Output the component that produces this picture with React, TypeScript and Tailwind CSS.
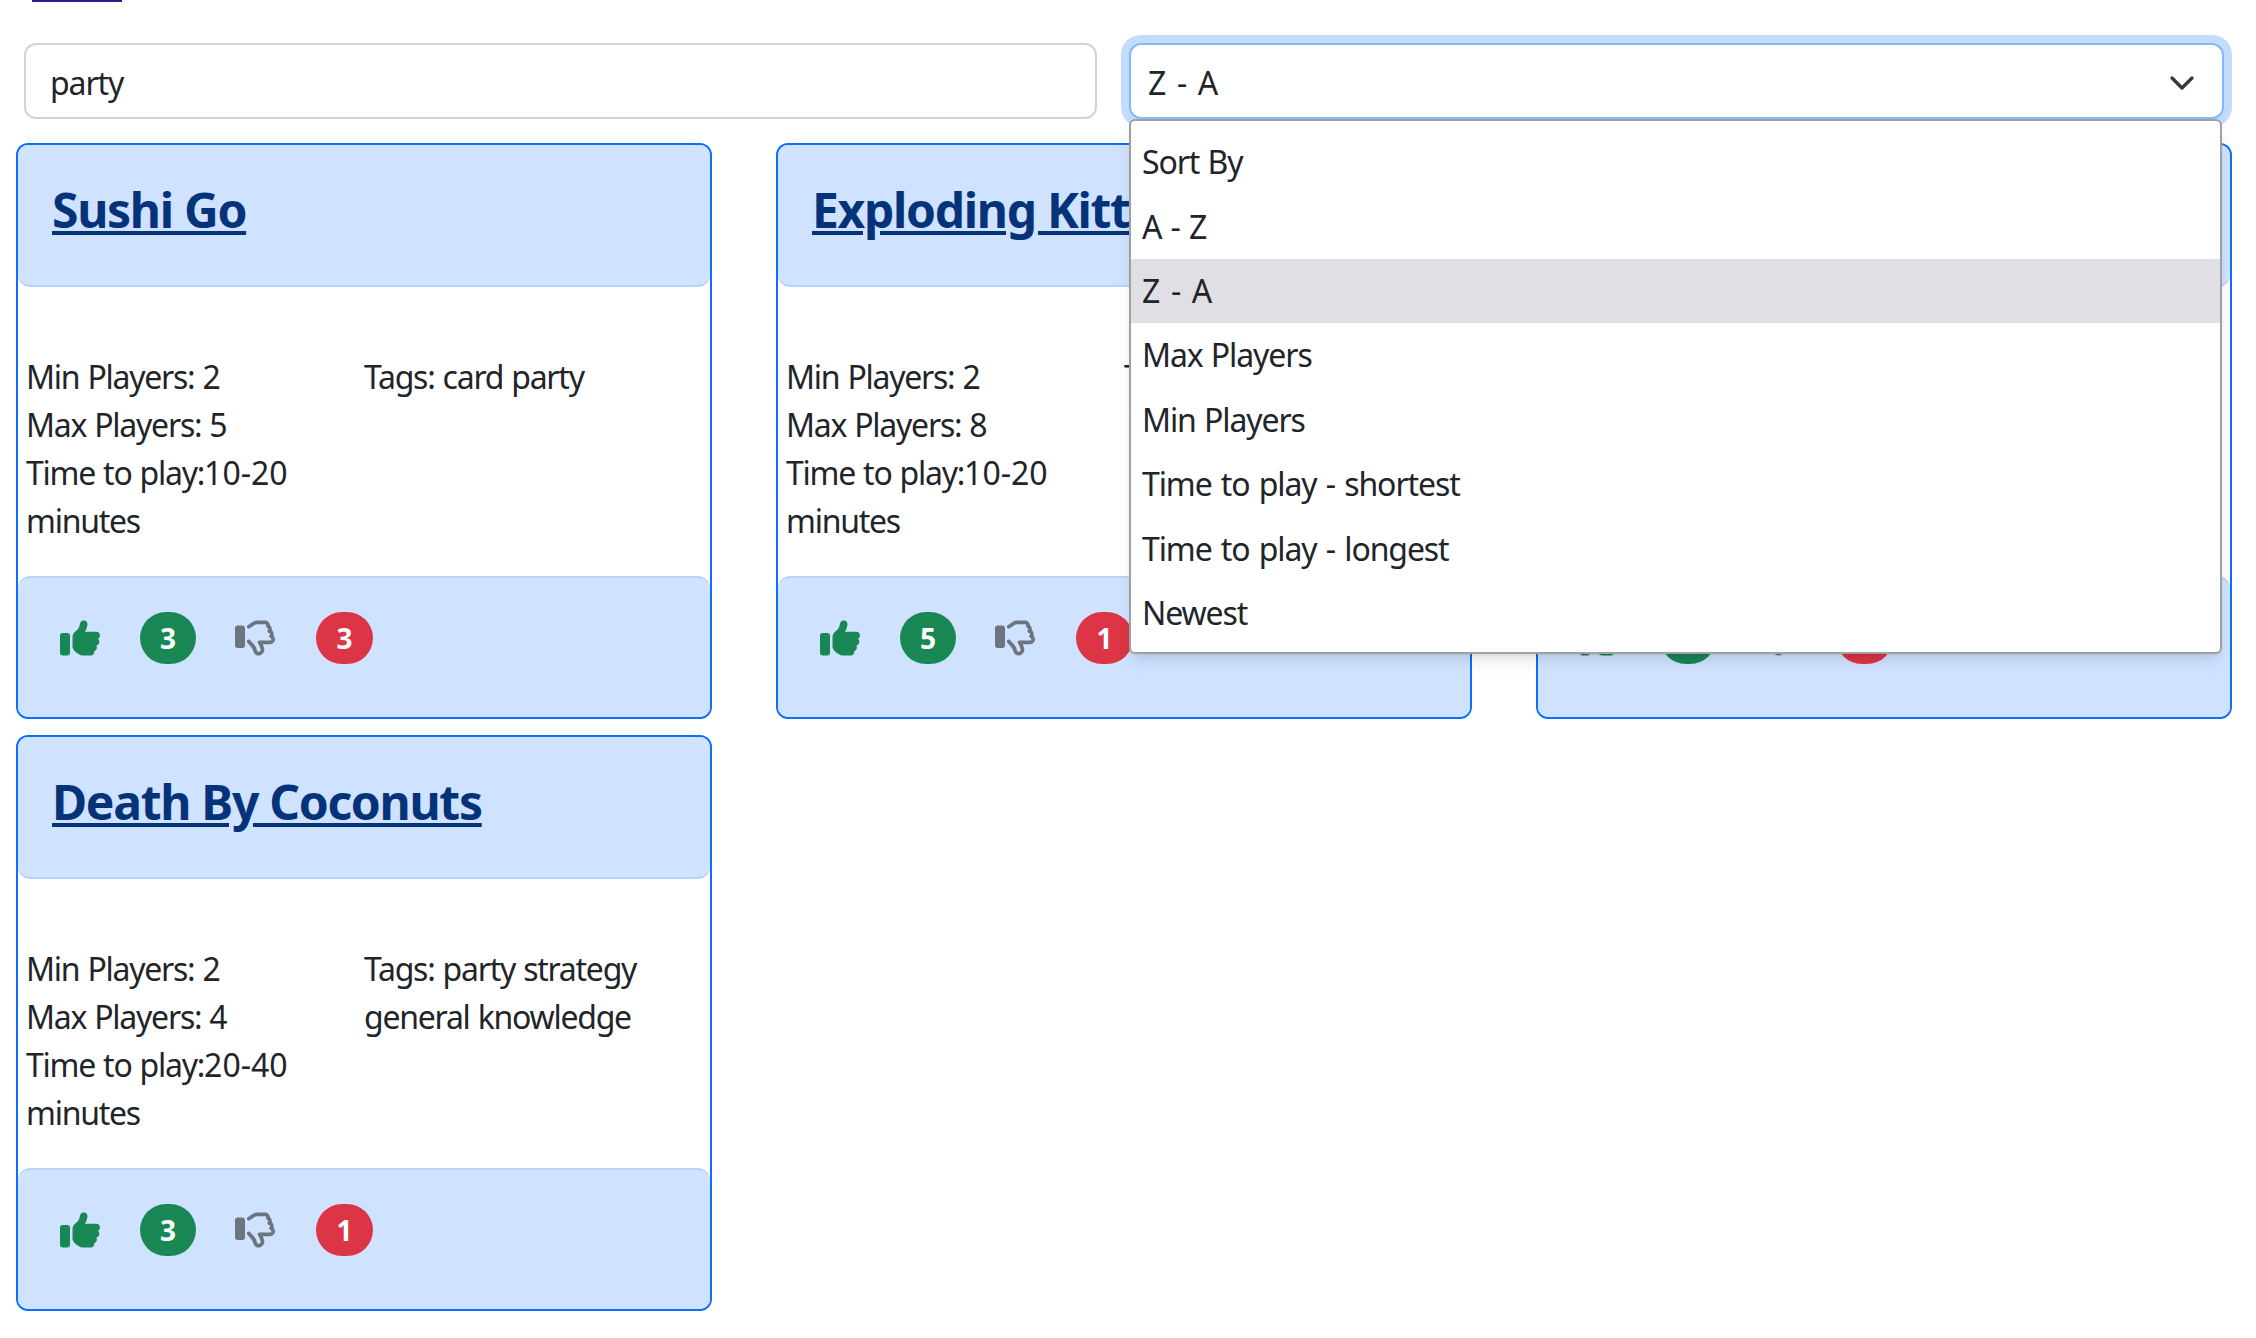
import { FaThumbsUp, FaRegThumbsDown } from "react-icons/fa6";
import { ChevronDown } from "lucide-react";

type Game = { title: string; min: number; max: number; time: string; tags: string[]; up: number; down: number };

const games: Game[] = [
  { title: "Sushi Go", min: 2, max: 5, time: "10-20", tags: ["card party"], up: 3, down: 3 },
  { title: "Exploding Kittens", min: 2, max: 8, time: "10-20", tags: ["card party"], up: 5, down: 1 },
  { title: "Codenames", min: 2, max: 8, time: "10-20", tags: ["card party"], up: 4, down: 1 },
  { title: "Death By Coconuts", min: 2, max: 4, time: "20-40", tags: ["party strategy", "general knowledge"], up: 3, down: 1 },
];

const options = ["Sort By", "A - Z", "Z - A", "Max Players", "Min Players", "Time to play - shortest", "Time to play - longest", "Newest"];

function Card({ game }: { game: Game }) {
  return (
    <div className="flex h-[576px] flex-col rounded-xl border-2 border-[#0d6efd] bg-white">
      <div className="h-[142px] shrink-0 rounded-t-[10px] rounded-b-xl border-b-2 border-[#b6d4fe] bg-[#cfe2ff] px-[34px] pt-[36px]">
        <a className="text-[48px] leading-[58px] font-bold tracking-[-1.3px] text-[#04337a] underline" href="#">
          {game.title}
        </a>
      </div>
      <div className="grid flex-1 grid-cols-[338px_1fr] pt-[66px] pl-2 text-[32px] leading-[48px] tracking-[-1.25px] [word-spacing:1px] text-[#212529]">
        <div>
          <div>Min Players: {game.min}</div>
          <div>Max Players: {game.max}</div>
          <div>
            Time to play:<span className="tracking-normal">{game.time}</span> minutes
          </div>
        </div>
        <div>
          Tags: {game.tags.map((t) => (
            <span key={t}>{t} </span>
          ))}
        </div>
      </div>
      <div className="flex h-[141px] shrink-0 items-start rounded-t-xl rounded-b-[10px] border-t-2 border-[#b6d4fe] bg-[#cfe2ff] pt-[34px] pl-[42px]">
        <FaThumbsUp className="mt-[6px] h-[40px] w-[40px] text-[#198754]" />
        <span className="ml-[40px] flex h-[52px] w-[56px] items-center justify-center rounded-full bg-[#198754] text-[28px] font-bold text-white">
          {game.up}
        </span>
        <FaRegThumbsDown className="mt-[6px] ml-[39px] h-[40px] w-[40px] text-[#6c757d]" />
        <span className="ml-[41px] flex h-[52px] w-[57px] items-center justify-center rounded-full bg-[#dc3545] text-[28px] font-bold text-white">
          {game.down}
        </span>
      </div>
    </div>
  );
}

export default function App() {
  return (
    <div className="min-h-[1338px] bg-white font-['Noto_Sans',sans-serif]">
      <div className="ml-8 h-[2px] w-[90px] bg-[#2a1f8f]" />
      <div className="mt-[41px] flex pl-6">
        <div className="flex h-[76px] w-[1073px] items-center rounded-xl border-2 border-[#ced4da] px-6 pt-[3px] text-[32px] tracking-[-1.1px] text-[#212529]">
          party
        </div>
        <div className="relative z-10 ml-[32px] w-[1095px]">
          <div className="flex h-[76px] items-center justify-between rounded-xl border-2 border-[#86b7fe] bg-white pt-[3px] pr-[20px] pl-[17px] text-[32px] tracking-[-1.1px] [word-spacing:4.5px] text-[#212529] ring-[8px] ring-[#c2dbfe]">
            Z - A
            <ChevronDown className="h-[40px] w-[40px] text-[#343a40]" strokeWidth={2} />
          </div>
          <div className="absolute top-[76px] left-0 w-[1093px] rounded-md border-2 border-[#a0a0a0] bg-white pt-[9px] pb-[7px] text-[32px] tracking-[-1.1px] [word-spacing:1px] text-[#212529] shadow-lg">
            {options.map((o) => (
              <div
                key={o}
                className={
                  o === "Z - A"
                    ? "flex h-[64.4px] items-center bg-[#e0dfe4] pl-[11px] [word-spacing:4.5px]"
                    : o.includes(" - ")
                      ? "flex h-[64.4px] items-center pl-[11px] [word-spacing:2px]"
                      : "flex h-[64.4px] items-center pl-[11px]"
                }
              >
                {o}
              </div>
            ))}
          </div>
        </div>
      </div>
      <div className="mt-[24px] grid grid-cols-[repeat(3,696px)] gap-x-[64px] gap-y-[16px] pl-4">
        {games.map((g) => (
          <Card key={g.title} game={g} />
        ))}
      </div>
    </div>
  );
}
